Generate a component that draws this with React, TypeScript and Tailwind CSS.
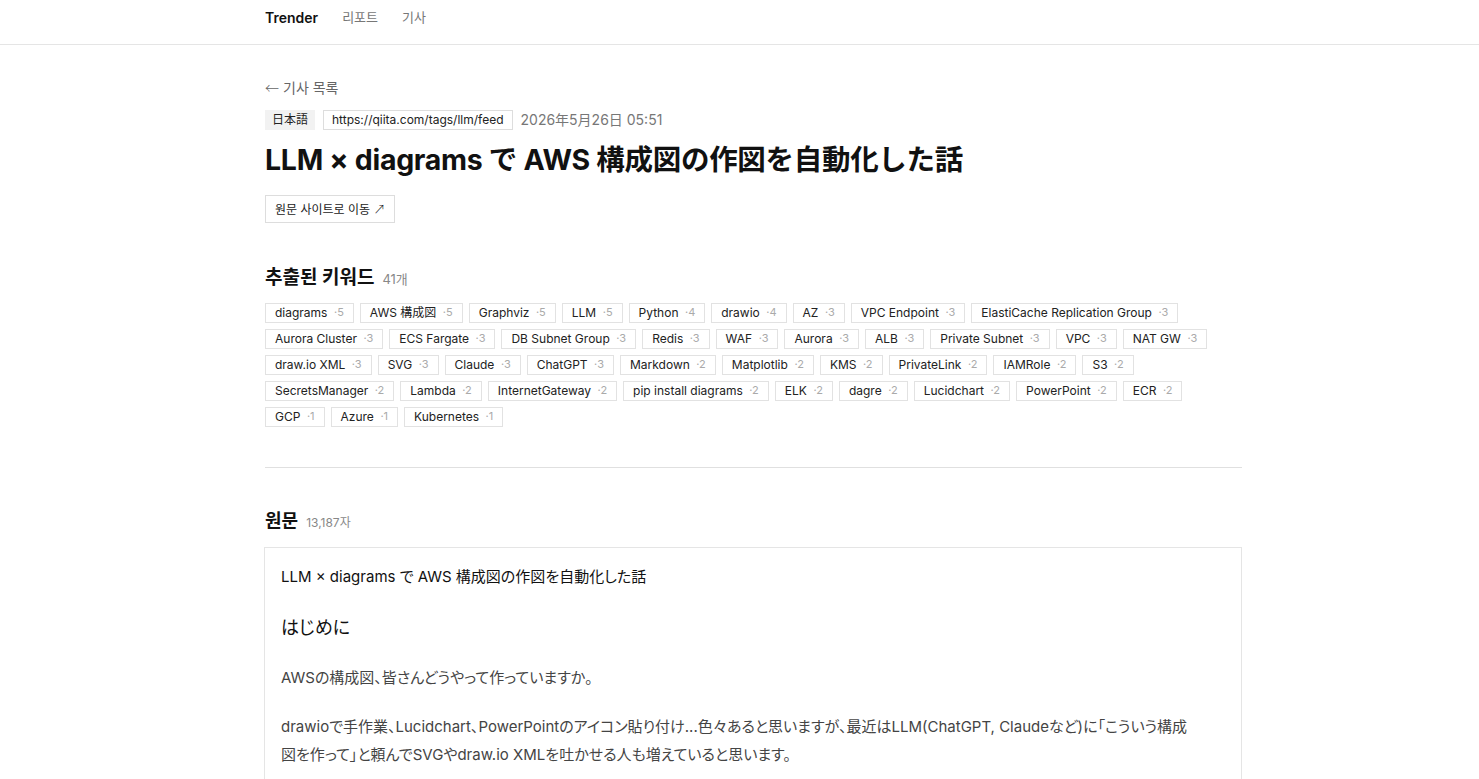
import React from 'react';

const keywords: [string, number][] = [
  ['diagrams', 5],
  ['AWS 構成図', 5],
  ['Graphviz', 5],
  ['LLM', 5],
  ['Python', 4],
  ['drawio', 4],
  ['AZ', 3],
  ['VPC Endpoint', 3],
  ['ElastiCache Replication Group', 3],
  ['Aurora Cluster', 3],
  ['ECS Fargate', 3],
  ['DB Subnet Group', 3],
  ['Redis', 3],
  ['WAF', 3],
  ['Aurora', 3],
  ['ALB', 3],
  ['Private Subnet', 3],
  ['VPC', 3],
  ['NAT GW', 3],
  ['draw.io XML', 3],
  ['SVG', 3],
  ['Claude', 3],
  ['ChatGPT', 3],
  ['Markdown', 2],
  ['Matplotlib', 2],
  ['KMS', 2],
  ['PrivateLink', 2],
  ['IAMRole', 2],
  ['S3', 2],
  ['SecretsManager', 2],
  ['Lambda', 2],
  ['InternetGateway', 2],
  ['pip install diagrams', 2],
  ['ELK', 2],
  ['dagre', 2],
  ['Lucidchart', 2],
  ['PowerPoint', 2],
  ['ECR', 2],
  ['GCP', 1],
  ['Azure', 1],
  ['Kubernetes', 1],
];

export default function App() {
  return (
    <div className="min-h-screen bg-white text-[#111] font-['Inter','Noto_Sans_CJK_JP','Noto_Sans_CJK_KR',sans-serif]">
      <header className="h-[45px] border-b border-[#e5e5e5]">
        <nav className="ml-[265px] h-full flex items-center gap-6 pb-[9px]">
          <span className="text-[14px] font-semibold">Trender</span>
          <span className="text-[13px] text-[#777]">리포트</span>
          <span className="text-[13px] text-[#777]">기사</span>
        </nav>
      </header>

      <main className="ml-[264px] w-[978px] pt-[32px]">
        <a className="h-5 flex items-center gap-1 text-[14px] text-[#666] ml-px">
          <span className="font-['Noto_Sans_CJK_KR',sans-serif] font-light leading-none">←</span>
          <span>기사 목록</span>
        </a>

        <div className="mt-[12px] flex items-center gap-2 text-[12px]">
          <span className="bg-[#f2f2f2] px-[7px] h-[20px] flex items-center text-[#222] ml-px">日本語</span>
          <span className="border border-[#ddd] px-2 h-[20px] flex items-center text-[#222]">
            https://qiita.com/tags/llm/feed
          </span>
          <span className="text-[14px] text-[#777]">2026年5月26日 05:51</span>
        </div>

        <h1 className="mt-[12px] text-[28.5px] font-bold leading-[36px] ml-px tracking-[-0.3px]">
          LLM × diagrams で AWS 構成図の作図を自動化した話
        </h1>

        <button className="mt-[17px] ml-px border border-[#ddd] h-[28px] px-[9px] text-[12px] text-[#222]">
          원문 사이트로 이동 <span className="font-['Noto_Sans_CJK_KR',sans-serif] font-light">↗</span>
        </button>

        <section className="mt-[41px]">
          <div className="flex items-baseline gap-2 ml-px">
            <h2 className="text-[19px] font-bold">추출된 키워드</h2>
            <span className="text-[13px] text-[#888]">41개</span>
          </div>
          <div className="mt-[10px] flex flex-wrap gap-[6px] w-[960px] ml-px">
            {keywords.map(([name, count]) => (
              <span
                key={name}
                className="h-[20px] border border-[#e2e2e2] px-[9px] flex items-center gap-[6.5px] text-[12px] text-[#222]"
              >
                {name}
                <span className="text-[11px] text-[#aaa]">·{count}</span>
              </span>
            ))}
          </div>
        </section>

        <hr className="mt-[40px] border-[#e0e0e0] ml-px w-[977px]" />

        <section className="mt-[39px]">
          <div className="flex items-baseline gap-2 ml-px">
            <h2 className="text-[18px] font-bold">원문</h2>
            <span className="text-[12px] text-[#888]">13,187자</span>
          </div>
          <div className="mt-[13px] border border-[#e5e5e5] px-4 pt-[17px] pb-8 [font-feature-settings:'palt']">
            <p className="text-[15px] text-[#111] leading-6">LLM × diagrams で AWS 構成図の作図を自動化した話</p>
            <h3 className="mt-[25px] text-[18px] text-[#111] leading-7">はじめに</h3>
            <p className="mt-[22px] text-[15px] text-[#444] leading-7">AWSの構成図、皆さんどうやって作っていますか。</p>
            <p className="mt-[21px] text-[15px] text-[#444] leading-7 w-[912px]">
              drawioで手作業、Lucidchart、PowerPointのアイコン貼り付け...色々あると思いますが、最近はLLM(ChatGPT,
              Claudeなど)に「こういう構成図を作って」と頼んでSVGやdraw.io XMLを吐かせる人も増えていると思います。
            </p>
          </div>
        </section>
      </main>
    </div>
  );
}
